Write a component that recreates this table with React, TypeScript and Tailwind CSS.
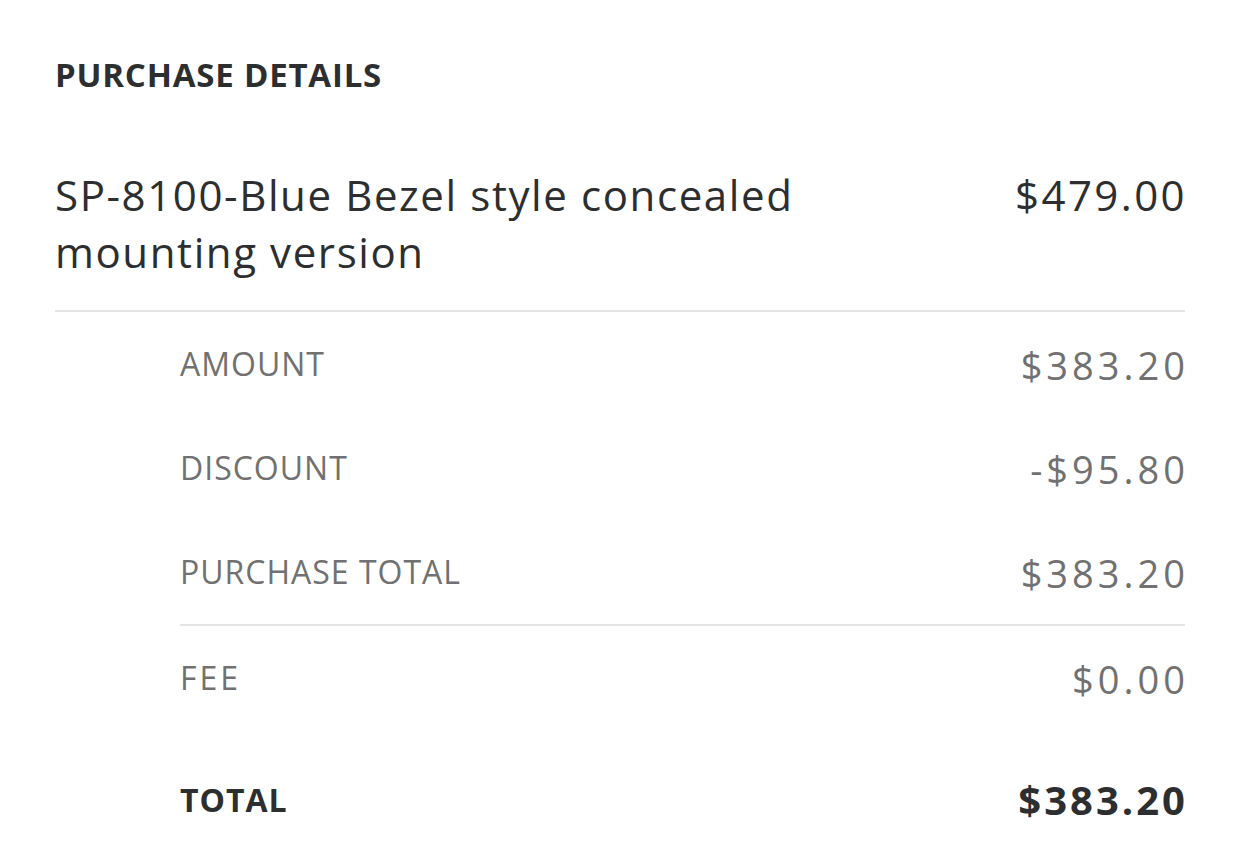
export default function App(): JSX.Element {
  const rows: { label: string; value: string }[] = [
    { label: 'AMOUNT', value: '$383.20' },
    { label: 'DISCOUNT', value: '-$95.80' },
    { label: 'PURCHASE TOTAL', value: '$383.20' },
  ];

  return (
    <div className="min-h-[856px] bg-white pt-[55px] pl-[55px] pr-[57px] text-[#2c2e2f]" style={{ fontFamily: '"Open Sans", "Noto Sans", sans-serif' }}>
      <h2 className="text-[33px] leading-[40px] font-bold tracking-[0.8px]">PURCHASE DETAILS</h2>

      <div className="mt-[71px] flex justify-between pb-[30px]">
        <p className="w-[800px] text-[42px] leading-[57px] tracking-[1.6px]">SP-8100-Blue Bezel style concealed mounting version</p>
        <span className="-mr-[2px] text-[42px] leading-[57px] tracking-[2.4px]">$479.00</span>
      </div>

      <div className="border-t-2 border-[#e4e4e4]">
        <div className="pl-[125px]">
          {rows.map((row) => (
            <div key={row.label} className="flex h-[104px] items-center justify-between text-[#717171]">
              <span className="text-[32px] tracking-[1px]">{row.label}</span>
              <span className="-mr-[4px] pt-[3px] text-[38px] tracking-[4px]">{row.value}</span>
            </div>
          ))}

          <div className="border-t-2 border-[#e4e4e4]">
            <div className="flex h-[104px] items-center justify-between text-[#717171]">
              <span className="text-[32px] tracking-[3px]">FEE</span>
              <span className="-mr-[4px] pt-[3px] text-[38px] tracking-[4px]">$0.00</span>
            </div>
            <div className="flex h-[140px] items-center justify-between">
              <span className="text-[32px] font-bold tracking-[1px]">TOTAL</span>
              <span className="-mr-[3px] text-[40px] font-bold tracking-[3px]">$383.20</span>
            </div>
          </div>
        </div>
      </div>
    </div>
  );
}
